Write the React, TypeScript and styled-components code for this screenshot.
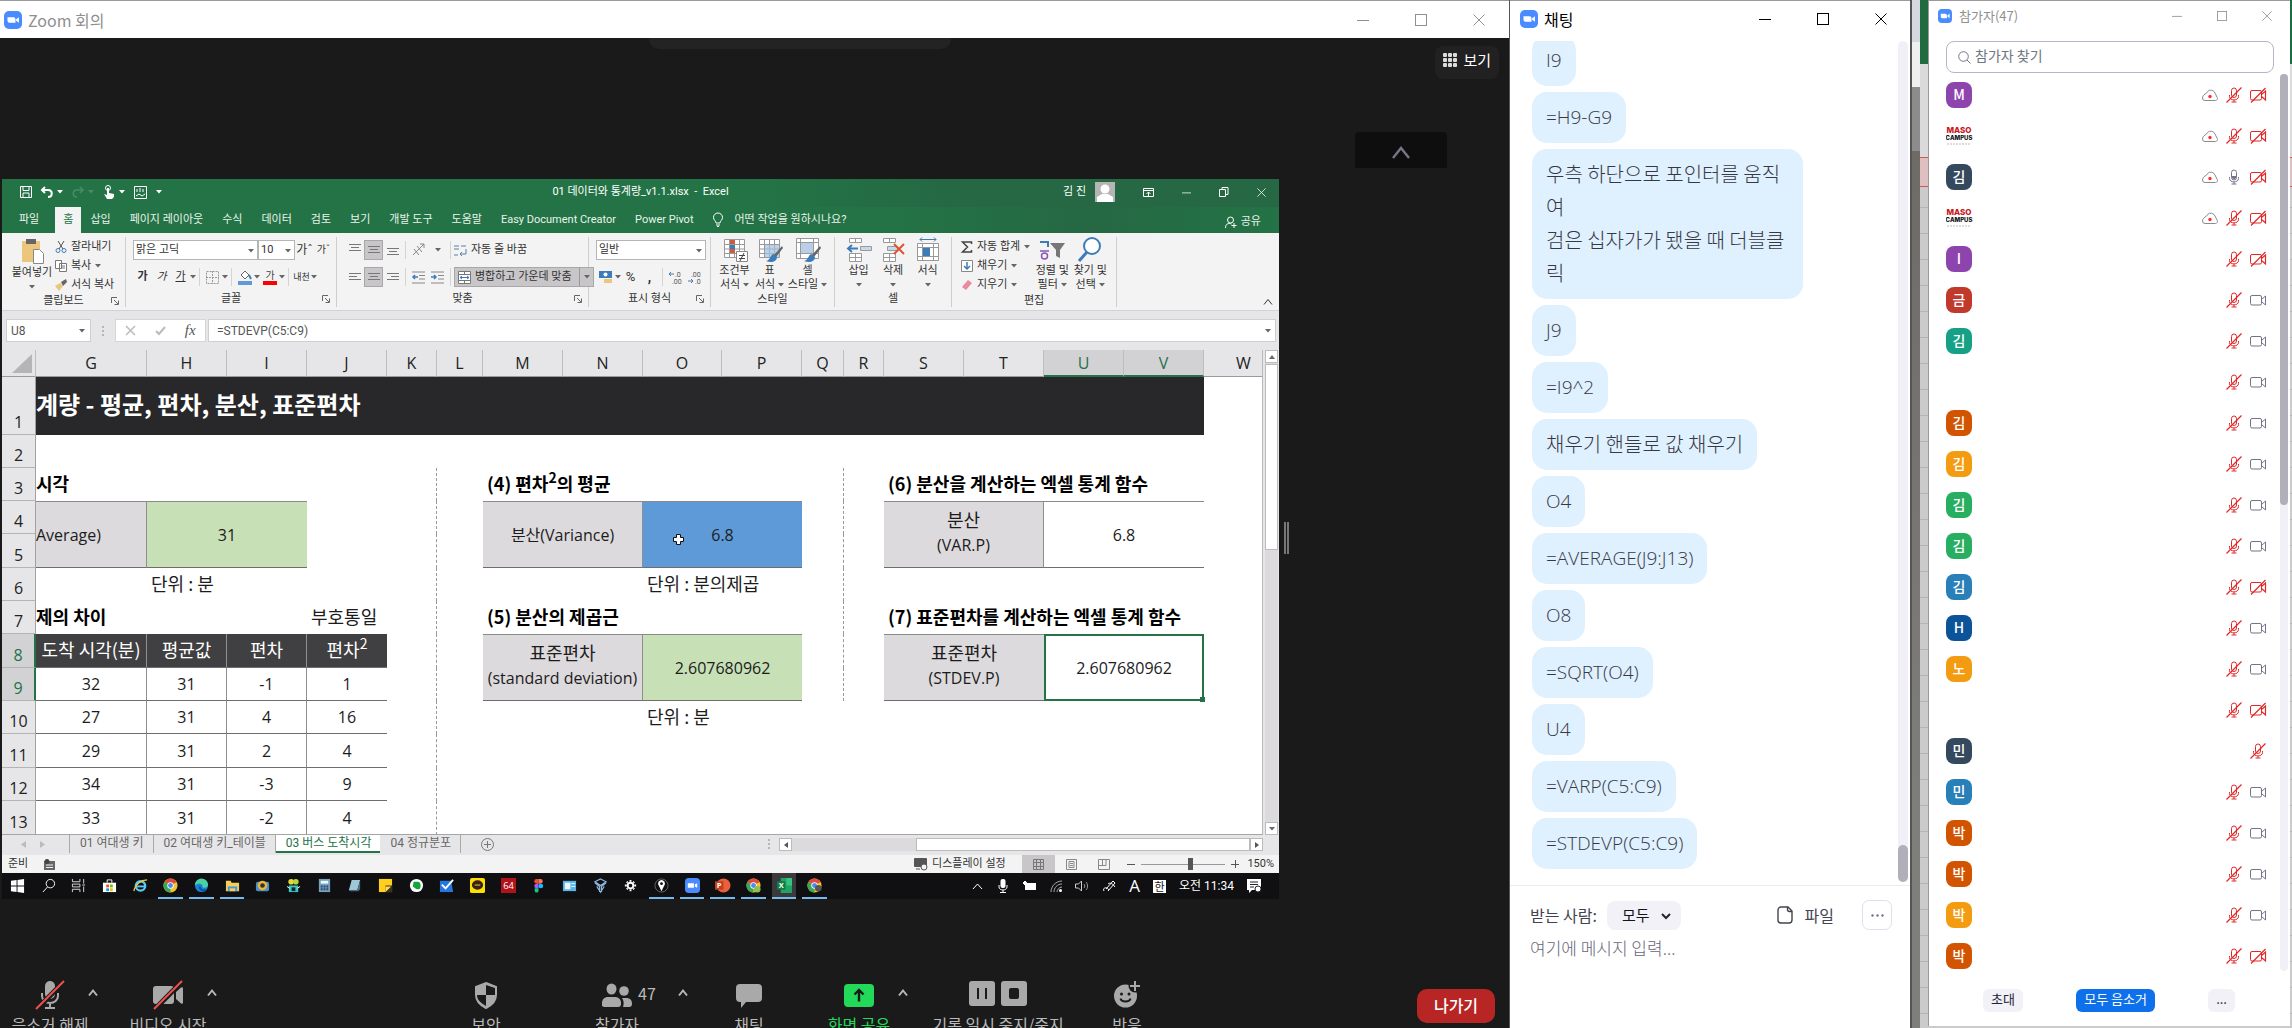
import React from "react";
import styled, { createGlobalStyle, css } from "styled-components";

const KR = `"Noto Sans CJK KR", sans-serif`;
const LATIN = `"Open Sans", "Noto Sans CJK KR", sans-serif`;
const OFFICE = `Roboto, "Noto Sans CJK KR", sans-serif`;

const Global = createGlobalStyle`
  *, *::before, *::after { box-sizing: border-box; }
  html, body { margin: 0; height: 100%; background: #cbcbcb; }
  body { font-family: ${KR}; overflow: hidden; }
  button, input, select, textarea { font: inherit; color: inherit; margin: 0; }
  button { border: 0; padding: 0; background: none; cursor: pointer; }
  svg { display: block; flex: none; overflow: visible; }
  sup { font-size: 14px; line-height: 0; vertical-align: 8px; }
`;

/* ---------- icons ---------- */

type SvgProps = { w: number; h?: number; vb?: string; children: React.ReactNode };
const Svg = ({ w, h = w, vb, children }: SvgProps) => (
  <svg width={w} height={h} viewBox={vb ?? `0 0 ${w} ${h}`} fill="none" stroke="none" aria-hidden="true">
    {children}
  </svg>
);

const ZoomLogo = ({ size = 18 }) => (
  <Svg w={size} vb="0 0 18 18">
    <rect width="18" height="18" rx="5" fill="#4a8cff" />
    <path d="M3.5 6.2h6a2 2 0 0 1 2 2v3.6h-6a2 2 0 0 1-2-2zM12.1 8.2l2.8-2v5.6l-2.8-2z" fill="#fff" />
  </Svg>
);
const Minimize = ({ size = 12 }) => (
  <Svg w={size} vb="0 0 12 12"><path d="M0 6.5h12" stroke="currentColor" /></Svg>
);
const Maximize = ({ size = 12 }) => (
  <Svg w={size} vb="0 0 12 12"><rect x=".5" y=".5" width="11" height="11" stroke="currentColor" /></Svg>
);
const Close = ({ size = 12 }) => (
  <Svg w={size} vb="0 0 12 12"><path d="M.5.5l11 11M11.5.5l-11 11" stroke="currentColor" /></Svg>
);
const Restore = () => (
  <Svg w={10}><path d="M.5 2.5h6v7h-6zM3 2.500V.5h6v7H6.500" stroke="currentColor" /></Svg>
);
const CaretDown = ({ color = "#666" }) => (
  <Svg w={6} h={4}><path d="M0 0h6L3 3.500z" fill={color} /></Svg>
);
const ChevronUp = ({ w = 10, sw = 2 }) => (
  <Svg w={w} h={w} vb="0 0 10 10"><path d="M1 7.500l4-5 4 5" stroke="currentColor" strokeWidth={sw} /></Svg>
);
const Launcher = () => (
  <Svg w={8}><path d="M.5 6V.5H6M3 3l4 4M7.500 3.500v4h-4" stroke="#666" /></Svg>
);
const Grip = () => (
  <Svg w={2} h={10}><path d="M0 0h2v2H0zM0 4h2v2H0zM0 8h2v2H0z" fill="#b5b5b5" /></Svg>
);

const MicMuted = () => (
  <Svg w={30}>
    <rect x="10" y="1" width="10" height="18" rx="5" fill="#a9a9a9" />
    <path d="M7 13v3a8 7 0 0 0 16 0v-3M15 23v5M10 28h10" stroke="#a9a9a9" strokeWidth="2" />
    <path d="M1.500 29.500L29.500 1" stroke="#1a1a1a" strokeWidth="5" />
    <path d="M1 29L29 1" stroke="#f05050" strokeWidth="2" />
  </Svg>
);
const VideoMuted = () => (
  <Svg w={30}>
    <rect x="0" y="6" width="21" height="18" rx="3" fill="#a9a9a9" />
    <path d="M23 12l5-4.500q2-1 2 1v14q0 2-2 1l-5-4.500z" fill="#a9a9a9" />
    <path d="M1.500 29.500L29.500 1" stroke="#1a1a1a" strokeWidth="5" />
    <path d="M1 29L29 1" stroke="#f05050" strokeWidth="2" />
  </Svg>
);
const Shield = () => (
  <Svg w={24} h={30}>
    <path d="M12 3l10 4v8c0 6-4 10-10 13C6 25 2 21 2 15V7z" fill="#a9a9a9" stroke="#a9a9a9" strokeWidth="2" />
    <path d="M12 5v10h9V8zM12 15v11c-5-3-9-6-9-11z" fill="#1a1a1a" />
  </Svg>
);
const People = () => (
  <Svg w={30}>
    <ellipse cx="9.500" cy="9" rx="5" ry="5.500" fill="#a9a9a9" />
    <path d="M0 26v-3c0-4 3-6 6-6h7c3 0 6 2 6 6v1c0 2-1 3-3 3H2z" fill="#a9a9a9" />
    <circle cx="22" cy="11" r="4.800" fill="#a9a9a9" />
    <path d="M20 18h4c4 0 6 2 6 6 0 2-1 3-3 3h-6c1-3 1-6-1-9z" fill="#a9a9a9" />
  </Svg>
);
const ChatBubble = () => (
  <Svg w={26} h={30}><path d="M4 4h18a4 4 0 0 1 4 4v10a4 4 0 0 1-4 4H10l-5 6v-6H4a4 4 0 0 1-4-4V8a4 4 0 0 1 4-4z" fill="#a9a9a9" /></Svg>
);
const ShareUp = () => (
  <Svg w={30}>
    <rect x="0" y="4" width="30" height="23" rx="4" fill="#23d959" />
    <path d="M15 21.500v-11M10.500 14.500l4.500-4.500 4.500 4.500" stroke="#1a1a1a" strokeWidth="2.400" />
  </Svg>
);
const PauseStop = () => (
  <Svg w={60} h={30}>
    <rect x="1" y="1" width="26" height="25" rx="3" fill="#a9a9a9" />
    <path d="M10 8v11M18 8v11" stroke="#1a1a1a" strokeWidth="2" />
    <rect x="33" y="1" width="26" height="25" rx="3" fill="#a9a9a9" />
    <rect x="41" y="8" width="10" height="11" rx="2" fill="#1a1a1a" />
  </Svg>
);
const Smile = () => (
  <Svg w={28} h={30}>
    <circle cx="12.500" cy="16" r="11.500" fill="#a9a9a9" />
    <circle cx="22" cy="6" r="6.500" fill="#1a1a1a" />
    <path d="M22 1v10M17 6h10" stroke="#a9a9a9" strokeWidth="2" />
    <circle cx="8.500" cy="14" r="1.500" fill="#1a1a1a" /><circle cx="16" cy="14" r="1.500" fill="#1a1a1a" />
    <path d="M7.500 18.500c1 4 9 4 10 0" stroke="#1a1a1a" strokeWidth="2" />
  </Svg>
);
const GridDots = () => (
  <Svg w={14}>
    {[0, 5, 10].map((y) => [0, 5, 10].map((x) => <rect key={`${x}${y}`} x={x} y={y} width="4" height="4" rx="1" fill="#ddd" />))}
  </Svg>
);

const RED = "#e02828";
const CloudRec = () => (
  <Svg w={16}>
    <path d="M3 13.500h10.500a2 2 0 0 0 1.700-3L13 6a4.600 4.600 0 0 0-7.500-1.500L4.300 6.300 3 7C1.500 8 .5 9.500.5 11A2.500 2.500 0 0 0 3 13.500z" stroke="#8b8a92" />
    <circle cx="8" cy="9.500" r="1.700" fill="#ff2d2d" />
  </Svg>
);
const MicOn = () => (
  <Svg w={16}>
    <rect x="5.500" y="1" width="5" height="10" rx="2.500" stroke="#747487" />
    <path d="M6 7h4v2l-2 1.500L6 9z" fill="#747487" />
    <path d="M3.500 8v1.500c0 4.500 9 4.500 9 0V8M8 13v2M5.500 15h5" stroke="#747487" />
  </Svg>
);
const MicOff = () => (
  <Svg w={16}>
    <rect x="5.500" y="1" width="5" height="9.500" rx="2.500" stroke={RED} />
    <path d="M3.500 8v1.500c0 4.500 9 4.500 9 0V8M8 13v2M5.500 15h5" stroke={RED} />
    <path d="M.5 15.500l15-15" stroke={RED} strokeWidth="1.200" />
  </Svg>
);
const CamOn = () => (
  <Svg w={16}>
    <rect x=".5" y="3.500" width="11" height="9.500" rx="1.500" stroke="#747487" />
    <path d="M11.500 7.500l4-3.500v9l-4-3.500" stroke="#747487" />
  </Svg>
);
const CamOff = () => (
  <Svg w={16}>
    <rect x=".5" y="3.500" width="11" height="9.500" rx="1.500" stroke={RED} />
    <path d="M11.500 7.500l4-3.500v9l-4-3.500M1 15.500L15.500 1" stroke={RED} strokeWidth="1.200" />
  </Svg>
);
const SearchIcon = ({ size = 13, color = "#747487" }) => (
  <Svg w={size} vb="0 0 13 13"><circle cx="5.500" cy="5.500" r="4.800" stroke={color} /><path d="M9 9l3.500 3.500" stroke={color} /></Svg>
);

/* ---------- windows shell ---------- */

const Desktop = styled.div`
  display: flex;
  height: 100vh;
  min-height: 640px;
  overflow: hidden;
`;
const Meeting = styled.section`
  flex: 1 1 0;
  min-width: 0;
  display: flex;
  flex-direction: column;
  background: #1a1a1a;
  overflow: hidden;
`;
const TitleBar = styled.header<{ $active?: boolean; $small?: boolean }>`
  flex: none;
  display: flex;
  align-items: center;
  height: ${(p) => (p.$small ? 32 : 38)}px;
  padding: ${(p) => (p.$small ? "0 18px 2px 9px" : "0 24px 0 4px")};
  gap: ${(p) => (p.$small ? 7 : 6)}px;
  background: #fff;
  border-top: 1px solid #9a9a9a;
  color: ${(p) => (p.$active ? "#000" : "#8f8f8f")};
  font-size: ${(p) => (p.$small ? 13 : 16)}px;
  line-height: 24px;
`;
const WindowTitle = styled.h1`
  margin: 0;
  flex: 1;
  font: inherit;
  font-weight: 400;
`;
const WindowButtons = styled.div<{ $gap: number }>`
  display: flex;
  gap: ${(p) => p.$gap}px;
`;
const WinBtns = ({ gap, size }: { gap: number; size?: number }) => (
  <WindowButtons $gap={gap}>
    <button aria-label="최소화"><Minimize size={size} /></button>
    <button aria-label="최대화"><Maximize size={size} /></button>
    <button aria-label="닫기"><Close size={size} /></button>
  </WindowButtons>
);

const Stage = styled.div`
  position: relative;
  flex: 1 1 0;
  min-height: 0;
  display: grid;
  grid-template-columns: minmax(0, 1fr) 230px;
`;
const TopTab = styled.div`
  position: absolute;
  top: 0;
  left: 43%;
  width: 20%;
  height: 11px;
  border-radius: 0 0 10px 10px;
  background: #232323;
`;
const ShareArea = styled.div`
  padding: 141px 0 0 2px;
  min-width: 0;
`;
const Side = styled.aside`
  display: flex;
  flex-direction: column;
`;
const ViewButton = styled.button`
  align-self: flex-end;
  display: flex;
  align-items: center;
  gap: 6px;
  height: 33px;
  margin: 8px 10px 0 0;
  padding: 0 8px 6px;
  border-radius: 8px;
  background: #212121;
  color: #fff;
  font-size: 15px;
`;
const CollapseButton = styled.button`
  display: grid;
  place-items: center;
  width: 92px;
  height: 36px;
  margin: 53px 0 0 76px;
  border-radius: 4px 4px 0 0;
  background: #0e0e0e;
  color: #77758a;
  padding-top: 6px;
`;
const Splitter = styled.div`
  width: 5px;
  height: 32px;
  margin: 354px 0 0 5px;
  border: solid #777;
  border-width: 0 2px;
`;

/* ---------- meeting toolbar ---------- */

const Toolbar = styled.footer`
  flex: none;
  display: flex;
  justify-content: space-between;
  height: 52px;
  padding-right: 14px;
`;
const ToolGroup = styled.div<{ $gap: number; $end?: number }>`
  display: flex;
  gap: ${(p) => p.$gap}px;
  padding-right: ${(p) => p.$end ?? 0}px;
`;
const Tool = styled.div<{ $w: number; $green?: boolean }>`
  width: ${(p) => p.$w}px;
  display: grid;
  grid-template-columns: 1fr auto 1fr;
  grid-template-rows: 36px 24px;
  color: ${(p) => (p.$green ? "#23d959" : "#b9b9b9")};
`;
const ToolIcon = styled.button`
  grid-column: 2;
  padding-top: 4px;
  display: flex;
  align-items: flex-start;
`;
const ToolExtra = styled.div`
  grid-column: 3;
  display: flex;
  align-items: center;
  justify-content: space-between;
  padding: 0 2px 2px 6px;
  color: #b9b9b9;
  font-size: 16px;
`;
const ToolLabel = styled.span`
  grid-column: 1 / -1;
  justify-self: center;
  white-space: nowrap;
  font-size: 16px;
  line-height: 24px;
`;
const LeaveButton = styled.button`
  width: 78px;
  height: 34px;
  margin-top: 13px;
  padding-bottom: 2px;
  border-radius: 10px;
  background: #b72624;
  color: #fff;
  font-size: 16px;
  font-weight: 500;
`;

type ToolProps = { w: number; icon: React.ReactNode; label: string; caret?: boolean; count?: string; green?: boolean };
const ToolItem = ({ w, icon, label, caret, count, green }: ToolProps) => (
  <Tool $w={w} $green={green}>
    <ToolIcon aria-label={label}>{icon}</ToolIcon>
    {caret && (
      <ToolExtra>
        <span>{count}</span>
        <button aria-label={`${label} 옵션`}><ChevronUp /></button>
      </ToolExtra>
    )}
    <ToolLabel>{label}</ToolLabel>
  </Tool>
);

/* ---------- Excel ---------- */

const Excel = styled.div`
  display: flex;
  flex-direction: column;
  background: #e6e6e8;
  font-family: ${OFFICE};
  font-size: 11px;
  line-height: 14px;
  color: #333;
`;
const ExcelTitle = styled.div`
  display: grid;
  grid-template-columns: 1fr auto 1fr;
  align-items: center;
  height: 28px;
  padding-bottom: 2px;
  background: linear-gradient(90deg, #237346 60%, #256843 75%, #256843);
  color: #fff;
`;
const Quick = styled.div`
  display: flex;
  align-items: center;
  padding-left: 18px;
  gap: 9px;
`;
const QuickPair = styled.div`
  display: flex;
  align-items: center;
  gap: 4px;
`;
const TitleRight = styled.div`
  display: flex;
  justify-content: flex-end;
  align-items: center;
  padding-right: 13px;
  gap: 28px;
`;
const Account = styled.div`
  display: flex;
  align-items: center;
  gap: 9px;
`;
const MenuTabs = styled.nav`
  display: flex;
  height: 26px;
  padding: 0 18px 0 8px;
  background: linear-gradient(90deg, #237346 70%, #256843 85%, #237346);
  color: #e9f3ec;
`;
const MenuTab = styled.button<{ $on?: boolean; $push?: boolean }>`
  display: flex;
  align-items: center;
  gap: ${(p) => (p.$push ? 4 : 12)}px;
  padding: 0 10px 0 9px;
  white-space: nowrap;
  ${(p) => p.$on && css`margin-left: 6px; background: #f3f3f3; color: #237346; padding: 0 8px;`}
  ${(p) => p.$push && css`margin-left: auto; padding: 4px 0 0;`}
`;
const Ribbon = styled.div`
  display: flex;
  height: 78px;
  padding: 4px 0 3px;
  background: #f3f3f3;
  border-bottom: 1px solid #d2d2d2;
`;
const Group = styled.div<{ $w: number }>`
  width: ${(p) => p.$w}px;
  flex: none;
  display: flex;
  flex-direction: column;
  border-right: 1px solid #cfcfcf;
`;
const GroupBody = styled.div<{ $pad?: number; $center?: boolean }>`
  flex: 1;
  display: flex;
  padding: 0 ${(p) => p.$pad ?? 7}px;
  justify-content: ${(p) => (p.$center ? "center" : "flex-start")};
`;
const GroupFoot = styled.div`
  display: grid;
  grid-template-columns: 14px 1fr 14px;
  align-items: center;
  text-align: center;
  height: 16px;
  button { grid-column: 3; }
  span { grid-column: 2; grid-row: 1; }
`;
const Rows = styled.div<{ $gap?: number }>`
  display: flex;
  flex-direction: column;
  gap: ${(p) => p.$gap ?? 2}px;
`;
const Line = styled.div<{ $h?: number }>`
  display: flex;
  align-items: center;
  height: ${(p) => p.$h ?? 24}px;
`;
const IconCell = styled.button<{ $on?: boolean; $w?: number }>`
  width: ${(p) => p.$w ?? 19}px;
  height: 20px;
  display: grid;
  place-items: center;
  ${(p) => p.$on && css`background: #c8c6c9; border: 1px solid #a8a8a8;`}
`;
const Sep = styled.i`
  width: 1px;
  height: 18px;
  margin: 0 3px;
  background: #d4d4d4;
`;
const Small = styled.button`
  display: flex;
  align-items: center;
  gap: 4px;
  height: 19px;
  white-space: nowrap;
`;
const Big = styled.button<{ $w: number }>`
  width: ${(p) => p.$w}px;
  display: flex;
  flex-direction: column;
  align-items: center;
  white-space: nowrap;
  line-height: 14px;
  > svg:first-child { margin-bottom: 1px; }
  span { display: flex; align-items: center; gap: 3px; min-height: 13px; }
`;
const SelectBox = styled.div<{ $w: number }>`
  position: relative;
  width: ${(p) => p.$w}px;
  height: 20px;
  border: 1px solid #b5b5b5;
  background: #fff;
  select {
    appearance: none;
    width: 100%;
    height: 18px;
    border: 0;
    padding: 0 2px;
    background: transparent;
    line-height: 18px;
    outline: none;
  }
  svg { position: absolute; right: 3px; top: 8px; pointer-events: none; }
`;
const MergeButton = styled.button`
  display: flex;
  align-items: center;
  height: 20px;
  padding: 0 3px;
  gap: 4px;
  border: 1px solid #a8a8a8;
  background: #c8c6c9;
  white-space: nowrap;
  i { width: 1px; height: 18px; background: #999; margin-left: 3px; }
`;
const RibbonEnd = styled.div`
  flex: 1;
  display: flex;
  align-items: flex-end;
  justify-content: flex-end;
  padding-right: 6px;
`;

const FormulaBar = styled.div`
  display: flex;
  align-items: center;
  height: 39px;
  padding: 0 3px 0 4px;
  font-size: 12px;
  color: #555;
`;
const NameBox = styled.div`
  display: flex;
  align-items: center;
  width: 85px;
  height: 23px;
  margin-right: 11px;
  padding: 0 5px 0 4px;
  border: 1px solid #cfcfcf;
  background: #fff;
  input { flex: 1; min-width: 0; border: 0; padding: 0; outline: none; background: none; }
`;
const FxBox = styled.div`
  display: flex;
  align-items: center;
  justify-content: space-around;
  width: 91px;
  height: 23px;
  margin: 0 2px 0 11px;
  border: 1px solid #d6d6d6;
  background: #fff;
  em { font-family: "Liberation Serif", serif; font-size: 15px; }
`;
const FormulaInput = styled.label`
  flex: 1;
  display: flex;
  align-items: center;
  height: 23px;
  padding: 0 4px 0 8px;
  border: 1px solid #cfcfcf;
  background: #fff;
  input { flex: 1; min-width: 0; border: 0; padding: 0; outline: none; background: none; }
`;

const SheetArea = styled.div`
  display: grid;
  grid-template-columns: minmax(0, 1fr) 16px;
  height: 485px;
`;
const SheetClip = styled.div`
  overflow: hidden;
  background: #fff;
  border-right: 1px solid #b9b9b9;
  border-bottom: 1px solid #a5a5a5;
`;
const Grid = styled.table`
  width: 100%;
  min-width: 1282px;
  table-layout: fixed;
  border-collapse: separate;
  border-spacing: 0;
  font-family: ${KR};
  font-size: 18px;
  line-height: 24px;
  color: #1c1c1c;
`;
const ColHead = styled.th<{ $on?: boolean }>`
  height: 27px;
  padding: 0;
  background: ${(p) => (p.$on ? "#d2d1d3" : "#e6e6e8")};
  color: ${(p) => (p.$on ? "#237346" : "#222")};
  border-right: 1px solid #bdbdbf;
  border-bottom: ${(p) => (p.$on ? "2px solid #237346" : "1px solid #9b9b9b")};
  font: 400 16px/24px ${LATIN};
`;
const RowHead = styled.th<{ $on?: boolean }>`
  padding: 0;
  vertical-align: bottom;
  background: ${(p) => (p.$on ? "#d2d1d3" : "#e6e6e8")};
  color: ${(p) => (p.$on ? "#237346" : "#222")};
  border-right: ${(p) => (p.$on ? "2px solid #237346" : "1px solid #a2a2a2")};
  border-bottom: 1px solid #b4b4b4;
  font: 400 16px/24px ${LATIN};
`;
type CellProps = { $bg?: string; $fg?: string; $bold?: boolean; $left?: boolean; $dots?: boolean; $num?: boolean; $t?: boolean; $b?: boolean; $r?: boolean; $big?: boolean; $cut?: boolean };
const Cell = styled.td<CellProps>`
  position: relative;
  padding: 0 0 ${(p) => (p.$num ? 0 : 4)}px ${(p) => (p.$left && !p.$cut ? 4 : 0)}px;
  overflow: hidden;
  white-space: nowrap;
  text-align: ${(p) => (p.$left ? "left" : "center")};
  background: ${(p) => p.$bg ?? "transparent"};
  color: ${(p) => p.$fg ?? "inherit"};
  ${(p) => p.$bold && css`font-weight: 700; color: ${p.$fg ?? "#000"};`}
  ${(p) => p.$num && css`font-family: ${LATIN}; font-size: 16px;`}
  ${(p) => p.$big && css`font-size: 24px; font-weight: 700; line-height: 32px;`}
  ${(p) => p.$dots && css`border-right: 1px dashed #999;`}
  ${(p) => p.$t && css`border-top: 1px solid #8a8a8a;`}
  ${(p) => p.$b && css`border-bottom: 1px solid #6e6e6e;`}
  ${(p) => p.$r && css`border-right: 1px solid #8f8f8f;`}
  small { display: block; font: 400 16px/28px ${LATIN}; }
`;
const Picked = styled(Cell)`
  overflow: visible;
  border: 2px solid #237346;
  &::after {
    content: "";
    position: absolute;
    right: -3px;
    bottom: -3px;
    width: 5px;
    height: 5px;
    background: #237346;
  }
`;
const CrossCursor = styled.span`
  position: absolute;
  left: 30px;
  top: 32px;
`;

const VScroll = styled.div`
  display: flex;
  flex-direction: column;
  background: #dcdadd;
  margin-left: 2px;
  border: solid #e6e6e8;
  border-width: 0 1px 0 0;
`;
const ScrollBtn = styled.button`
  display: grid;
  place-items: center;
  width: 13px;
  height: 13px;
  background: #fff;
  border: 1px solid #bbb;
`;
const VThumb = styled.div`
  height: 186px;
  margin: 1px 0 auto;
  width: 13px;
  background: #fff;
  border: 1px solid #bbb;
`;

const SheetTabs = styled.div`
  display: flex;
  align-items: flex-start;
  height: 20px;
  padding-right: 16px;
  font-size: 12px;
  line-height: 16px;
  color: #666;
`;
const SheetNav = styled.div`
  display: flex;
  align-items: center;
  gap: 14px;
  width: 68px;
  height: 18px;
  padding-left: 19px;
  border-right: 1px solid #aaa;
`;
const SheetTab = styled.button<{ $on?: boolean }>`
  height: 18px;
  padding: 0 9px 2px 10px;
  border-right: 1px solid #aaa;
  white-space: nowrap;
  ${(p) => p.$on && css`background: #fff; color: #237346; border-right: 0; border-bottom: 2px solid #237346; padding-bottom: 0;`}
`;
const AddSheet = styled.button`
  padding: 3px 20px;
`;
const HScroll = styled.div`
  flex: 0 1 484px;
  height: 13px;
  margin: 3px 0 0 9px;
  display: flex;
  background: #dcdadd;
`;
const GripSlot = styled.div`
  margin-left: auto;
  padding-top: 4px;
`;
const HThumb = styled.div`
  flex: 0 1 334px;
  margin-left: auto;
  background: #fff;
  border: 1px solid #bbb;
`;
const Status = styled.div`
  display: flex;
  align-items: center;
  height: 18px;
  padding: 0 5px 0 6px;
  background: #f3f3f3;
  gap: 16px;
`;
const StatusRight = styled.div`
  margin-left: auto;
  display: flex;
  align-items: center;
  gap: 6px;
`;
const ViewModes = styled.div`
  display: flex;
  margin-left: 10px;
`;
const ViewMode = styled.button<{ $on?: boolean }>`
  display: grid;
  place-items: center;
  width: 33px;
  height: 18px;
  background: ${(p) => (p.$on ? "#c8c6c9" : "none")};
`;
const ZoomRange = styled.input`
  appearance: none;
  width: 84px;
  height: 12px;
  background: linear-gradient(#999, #999) center / 100% 1px no-repeat;
  &::-webkit-slider-thumb { appearance: none; width: 5px; height: 12px; background: #555; }
`;

const Taskbar = styled.div`
  display: flex;
  align-items: stretch;
  justify-content: space-between;
  height: 26px;
  background: #101012;
  color: #fff;
  padding-right: 18px;
`;
const TaskApps = styled.div`
  display: flex;
  flex: 0 1 828px;
`;
const TaskApp = styled.button<{ $open?: boolean; $on?: boolean }>`
  flex: 1;
  display: grid;
  place-items: center;
  margin: 0 3px;
  border-bottom: 2px solid ${(p) => (p.$open ? "#76b9ed" : "transparent")};
  ${(p) => p.$on && css`background: #3a3a3c;`}
`;
const Tray = styled.div`
  display: flex;
  align-items: center;
  gap: 13px;
  font-size: 12px;
  b { font: 400 17px/20px ${LATIN}; }
`;

const Char = styled.span<{ $bold?: boolean; $italic?: boolean; $line?: boolean; $size?: number }>`
  font-size: ${(p) => p.$size ?? 11}px;
  font-weight: ${(p) => (p.$bold ? 700 : 400)};
  font-style: ${(p) => (p.$italic ? "italic" : "normal")};
  text-decoration: ${(p) => (p.$line ? "underline" : "none")};
`;

const AlignIcon = ({ y, short }: { y: number; short: "l" | "c" | "r" }) => {
  const off = short === "l" ? 0 : short === "c" ? 2 : 4;
  return (
    <Svg w={12}>
      <path d={`M0 ${y + 0.5}h12M${off} ${y + 3.5}h8M0 ${y + 6.5}h12`} stroke="#777" />
    </Svg>
  );
};
const Grid3 = ({ children }: { children: React.ReactNode }) => (
  <Svg w={26}>
    <path d="M2.500 2.500h20v18h-20zM2.500 7.500h20M2.500 12h20M2.500 16.500h20M7.500 2.500v18M12.500 2.500v18M17.500 2.500v18" fill="#fff" stroke="#9a9a9a" />
    {children}
  </Svg>
);
const Brush = () => (
  <g><path d="M25 9l-8 9 2 2 7-9z" fill="#666" /><path d="M17 17c-4 0-3 6-8 7 5 2 11 1 11-4z" fill="#3e7cb9" /></g>
);
const CellsIcon = ({ children }: { children: React.ReactNode }) => (
  <Svg w={26}>
    <path d="M3.500 1.500h12v4h-12zM9.500 1.500v4M3.500 16.500h12v8h-12zM3.500 20.500h12M9.500 16.500v8" fill="#fff" stroke="#999" />
    {children}
  </Svg>
);

const TASK_ICONS: { name: string; open?: boolean; on?: boolean; art: React.ReactNode }[] = [
  { name: "시작", art: <path d="M1 3l6-1v6H1zM8 2l7-1v7H8zM1 9h6v6l-6-1zM8 9h7v7l-7-1z" fill="#fff" /> },
  { name: "검색", art: <g stroke="#fff"><circle cx="10" cy="6" r="4.500" /><path d="M7 9.500L2 15" /></g> },
  { name: "작업 보기", art: <path d="M1.500 1v3h8V1M1.500 15v-3h8v3M1.500 6.500h8v3h-8zM13.500 1v5M13.500 9v6M12 7.500h3" stroke="#ddd" /> },
  { name: "스토어", art: <g><path d="M1 5h14v10H1z" fill="#fff" /><path d="M5.500 5V2h5v3" stroke="#fff" /><path d="M4.500 7h3v3h-3z" fill="#f25022" /><path d="M8.500 7h3v3h-3z" fill="#7fba00" /><path d="M4.500 11h3v3h-3z" fill="#00a4ef" /><path d="M8.500 11h3v3h-3z" fill="#ffb900" /></g> },
  { name: "Internet Explorer", art: <g><circle cx="8" cy="8.500" r="5" stroke="#5ac8f5" strokeWidth="2.500" /><path d="M4 9h9" stroke="#5ac8f5" strokeWidth="2" /><path d="M1 14C2 7 9 2 15 2" stroke="#f2c83c" strokeWidth="1.300" /></g> },
  { name: "Chrome", open: true, art: <Chrome /> },
  { name: "Edge", open: true, art: <g><circle cx="8" cy="8" r="7" fill="#1c7fd6" /><path d="M1 8a7 7 0 0 1 14-1c0 4-6 4-6 2 1-3-5-4-8-1z" fill="#48d3a0" /><path d="M6 9c0 3 3 5 7 4" stroke="#0b4f9c" strokeWidth="2" /></g> },
  { name: "탐색기", open: true, art: <g><path d="M1 3h5l1 2h8v9H1z" fill="#f7ce5b" /><path d="M3 9h10v5H3z" fill="#3f9be0" /><path d="M5 11h6v3H5z" fill="#f7ce5b" /></g> },
  { name: "보안", art: <g><rect x="1" y="4" width="14" height="10" rx="2" fill="#4f8fc8" /><circle cx="8" cy="8" r="5" fill="#e8b838" /><circle cx="8" cy="8" r="2.500" fill="#333" /></g> },
  { name: "메신저", art: <g><circle cx="5.500" cy="4" r="3" fill="#e8d838" /><circle cx="10.500" cy="4" r="3" fill="#b9d838" /><path d="M3 8h10v7H3z" fill="#39c7c0" /><path d="M1 9l3 2M15 9l-3 2" stroke="#fff" /><path d="M6 10h4v4H6z" fill="#123" /></g> },
  { name: "계산기", art: <g><rect x="2" y="1" width="12" height="14" fill="#7c9db8" /><path d="M4 3h8v3H4z" fill="#dff" /><path d="M4 8h2v2H4zM7 8h2v2H7zM10 8h2v2h-2zM4 11h2v2H4zM7 11h2v2H7zM10 11h2v2h-2z" fill="#1f4d77" /></g> },
  { name: "메모장", art: <g><path d="M5 2h9l-3 11H2z" fill="#9ec8d8" /><path d="M2 13h9l3-11v10l-2 2H3z" fill="#51707c" /></g> },
  { name: "스티커 메모", art: <g><path d="M1 1h14v14H1z" fill="#ffce1f" /><path d="M8 8h7v7H8z" fill="#3a3320" /><path d="M8 15V9h6z" fill="#ffde55" /></g> },
  { name: "Evernote", art: <g><circle cx="8" cy="8" r="7" fill="#fff" /><path d="M5 4h5c3 1 3 6 1 8H8l-4-3z" fill="#14a33c" /></g> },
  { name: "화이트보드", art: <g><path d="M1 3h12l2 12H1z" fill="#2277e0" /><path d="M3 7l4 4 8-9" stroke="#fff" strokeWidth="2" /></g> },
  { name: "카카오톡", art: <g><rect x="0" y="0" width="16" height="16" rx="2" fill="#fae100" /><ellipse cx="8" cy="7.500" rx="6" ry="5" fill="#3b1e1e" /><path d="M5 7.500h6" stroke="#fae100" /></g> },
  { name: "64", art: <g><rect width="16" height="16" fill="#b11319" /><text x="8" y="12" textAnchor="middle" fontSize="10" fill="#fff" fontFamily="Open Sans">64</text></g> },
  { name: "Figma", art: <g><path d="M8 1v5H6a2.500 2.500 0 0 1 0-5z" fill="#f24e1e" /><path d="M8 1h2a2.500 2.500 0 0 1 0 5H8z" fill="#ff7262" /><path d="M8 6v5H6a2.500 2.500 0 0 1 0-5z" fill="#a259ff" /><circle cx="10.500" cy="8.500" r="2.500" fill="#1abcfe" /><path d="M4 11h4v2.500a2 2 0 0 1-4 0z" fill="#0acf83" /></g> },
  { name: "원격", art: <g><path d="M1 3h14v11H1z" fill="#59b4e8" /><path d="M3 5h6v7H3z" fill="#e8f6ff" /><path d="M10 6h4M10 9h4" stroke="#fff" /></g> },
  { name: "VirtualBox", art: <path d="M8 1l6 3-6 4-6-4zM2 5l5 4v6M14 5L9 9v6M4 9l4 6 4-6" stroke="#8fb6dd" strokeWidth="1.300" /> },
  { name: "설정", art: <g stroke="#fff"><circle cx="8" cy="8" r="3" strokeWidth="2" /><path d="M8 2v2M8 12v2M2 8h2M12 8h2M4 4l1 1M11 11l1 1M12 4l-1 1M4 12l1-1" strokeWidth="2" /></g> },
  { name: "위치", open: true, art: <g><circle cx="8" cy="8" r="7" stroke="#666" /><path d="M8 2a4 4 0 0 1 3.500 5L8 14 4.500 7A4 4 0 0 1 8 2z" fill="#fff" /><circle cx="8" cy="6" r="1.500" fill="#111" /></g> },
  { name: "Zoom", open: true, art: <g><rect x="0" y="0" width="16" height="16" rx="4" fill="#4a8cff" /><path d="M3 5.500h6.500v5H3zM10.500 7l2.500-1.500v5L10.500 9z" fill="#fff" /></g> },
  { name: "PowerPoint", open: true, art: <g><circle cx="9" cy="8" r="7.500" fill="#e8603c" /><rect x="0" y="3.500" width="9" height="9" fill="#c43e1c" /><text x="4.500" y="11" textAnchor="middle" fontSize="8" fontWeight="700" fill="#fff" fontFamily="Open Sans">P</text></g> },
  { name: "Chrome 2", open: true, art: <g><Chrome /><circle cx="12" cy="12" r="3.500" fill="#8cc152" /></g> },
  { name: "Excel", open: true, on: true, art: <g><rect x="4" y="0" width="12" height="16" fill="#21a366" /><path d="M10 0h6v8h-6z" fill="#33c481" /><rect x="0" y="3.500" width="9" height="9" fill="#107c41" /><text x="4.500" y="11" textAnchor="middle" fontSize="8" fontWeight="700" fill="#fff" fontFamily="Open Sans">X</text></g> },
  { name: "Chrome 3", open: true, art: <g><Chrome /><circle cx="12" cy="11" r="3.500" fill="#555" /></g> },
];
function Chrome() {
  return (
    <g>
      <circle cx="8" cy="8" r="7.500" fill="#f3c332" />
      <path d="M8 8L1.500 4.250A7.500 7.500 0 0 1 14.500 4.250z" fill="#e04a3c" />
      <path d="M8 8L1.500 4.250A7.500 7.500 0 0 0 8 15.500z" fill="#3aa757" />
      <circle cx="8" cy="8" r="3.400" fill="#fff" /><circle cx="8" cy="8" r="2.600" fill="#4a8cf5" />
    </g>
  );
}

const COLS: [string, number][] = [["G", 111], ["H", 80], ["I", 80], ["J", 80], ["K", 50], ["L", 46], ["M", 80], ["N", 80], ["O", 79], ["P", 80], ["Q", 42], ["R", 40], ["S", 80], ["T", 80], ["U", 80], ["V", 80]];
const GRAY = "#dcdadd";
const GREEN = "#c8e0b6";
const DARK = "#403f41";

const Row = ({ n, h = 33, on, children }: { n: number; h?: number; on?: boolean; children?: React.ReactNode }) => (
  <tr style={{ height: h }}>
    <RowHead scope="row" $on={on}>{n}</RowHead>
    {children}
  </tr>
);
const Data = ({ v }: { v: number[] }) => (
  <>{v.map((x, i) => <Cell key={i} $num $b $r={i < 3}>{x}</Cell>)}</>
);

const Sheet = () => (
  <Grid>
    <colgroup>
      <col style={{ width: 34 }} />
      {COLS.map(([c, w]) => <col key={c} style={{ width: w }} />)}
      <col />
    </colgroup>
    <thead>
      <tr>
        <ColHead aria-label="모두 선택">
          <Svg w={33} h={26}><path d="M30 4v19H10z" fill="#b5b5b7" /></Svg>
        </ColHead>
        {COLS.map(([c]) => <ColHead key={c} scope="col" $on={c === "U" || c === "V"}>{c}</ColHead>)}
        <ColHead scope="col">W</ColHead>
      </tr>
    </thead>
    <tbody>
      <Row n={1} h={58}>
        <Cell colSpan={16} $bg="#28282a" $fg="#fff" $big $left $cut>계량 - 평균, 편차, 분산, 표준편차</Cell><Cell />
      </Row>
      <Row n={2}><Cell colSpan={17} /></Row>
      <Row n={3}>
        <Cell colSpan={4} $bold $left $cut>시각</Cell><Cell $dots /><Cell />
        <Cell colSpan={4} $bold $left>(4) 편차<sup>2</sup>의 평균</Cell><Cell $dots /><Cell />
        <Cell colSpan={5} $bold $left>(6) 분산을 계산하는 엑셀 통계 함수</Cell>
      </Row>
      <Row n={4}>
        <Cell rowSpan={2} $bg={GRAY} $num $left $cut $t $b $r>Average)</Cell>
        <Cell rowSpan={2} colSpan={2} $bg={GREEN} $num $t $b>31</Cell><Cell /><Cell $dots /><Cell />
        <Cell rowSpan={2} colSpan={2} $bg={GRAY} $num $t $b $r>분산(Variance)</Cell>
        <Cell rowSpan={2} colSpan={2} $bg="#5e9ad8" $num $t $b>
          6.8
          <CrossCursor>
            <Svg w={11}><path d="M3.500.5h4v3h3v4h-3v3h-4v-3h-3v-4h3z" fill="#fff" stroke="#111" /></Svg>
          </CrossCursor>
        </Cell>
        <Cell $dots /><Cell />
        <Cell rowSpan={2} colSpan={2} $bg={GRAY} $t $b $r>분산<small>(VAR.P)</small></Cell>
        <Cell rowSpan={2} colSpan={2} $num $t $b>6.8</Cell><Cell />
      </Row>
      <Row n={5} h={34}><Cell /><Cell $dots /><Cell /><Cell $dots /><Cell /><Cell /></Row>
      <Row n={6}>
        <Cell /><Cell colSpan={3} $left>단위 : 분</Cell><Cell $dots /><Cell />
        <Cell colSpan={2} /><Cell colSpan={2} $left>단위 : 분의제곱</Cell><Cell $dots /><Cell /><Cell colSpan={5} />
      </Row>
      <Row n={7}>
        <Cell colSpan={3} $bold $left $cut>제의 차이</Cell><Cell $left>부호통일</Cell><Cell $dots /><Cell />
        <Cell colSpan={4} $bold $left>(5) 분산의 제곱근</Cell><Cell $dots /><Cell />
        <Cell colSpan={5} $bold $left>(7) 표준편차를 계산하는 엑셀 통계 함수</Cell>
      </Row>
      <Row n={8} h={34} on>
        <Cell $bg={DARK} $fg="#fff" $b $r>도착 시각(분)</Cell><Cell $bg={DARK} $fg="#fff" $b $r>평균값</Cell>
        <Cell $bg={DARK} $fg="#fff" $b $r>편차</Cell><Cell $bg={DARK} $fg="#fff" $b>편차<sup>2</sup></Cell>
        <Cell $dots /><Cell />
        <Cell rowSpan={2} colSpan={2} $bg={GRAY} $t $b $r>표준편차<small>(standard deviation)</small></Cell>
        <Cell rowSpan={2} colSpan={2} $bg={GREEN} $num $t $b>2.607680962</Cell>
        <Cell $dots /><Cell />
        <Cell rowSpan={2} colSpan={2} $bg={GRAY} $t $b>표준편차<small>(STDEV.P)</small></Cell>
        <Picked rowSpan={2} colSpan={2} $num>2.607680962</Picked><Cell />
      </Row>
      <Row n={9} on><Data v={[32, 31, -1, 1]} /><Cell $dots /><Cell /><Cell $dots /><Cell /><Cell /></Row>
      <Row n={10}>
        <Data v={[27, 31, 4, 16]} /><Cell $dots /><Cell /><Cell colSpan={2} />
        <Cell colSpan={2} $left>단위 : 분</Cell><Cell colSpan={7} />
      </Row>
      <Row n={11} h={34}><Data v={[29, 31, 2, 4]} /><Cell $dots /><Cell colSpan={12} /></Row>
      <Row n={12}><Data v={[34, 31, -3, 9]} /><Cell $dots /><Cell colSpan={12} /></Row>
      <Row n={13} h={34}><Data v={[33, 31, -2, 4]} /><Cell $dots /><Cell colSpan={12} /></Row>
    </tbody>
  </Grid>
);

const Foot = ({ label, launcher }: { label: string; launcher?: boolean }) => (
  <GroupFoot>
    <span>{label}</span>
    {launcher && <button aria-label={`${label} 설정`}><Launcher /></button>}
  </GroupFoot>
);

const RibbonView = () => (
  <Ribbon>
    <Group $w={124}>
      <GroupBody>
        <Big $w={46}>
          <Svg w={26} h={28}>
            <path d="M3 4h18v21H3z" fill="#ecc67c" /><path d="M7 2h10v5H7z" fill="#666" />
            <path d="M14.500 12.500h6l4 4v10h-10z" fill="#fff" stroke="#888" />
          </Svg>
          붙여넣기<span><CaretDown /></span>
        </Big>
        <Rows $gap={0}>
          <Small>
            <Svg w={12}><path d="M3 0l5 8M9 0L4 8" stroke="#555" /><circle cx="3" cy="9.500" r="2" stroke="#3e7cb9" /><circle cx="9" cy="9.500" r="2" stroke="#3e7cb9" /></Svg>
            잘라내기
          </Small>
          <Small>
            <Svg w={12}><path d="M.5.5h6v8h-6zM4.500 3.500h7v8h-7zM6 6h4M6 8h4" fill="#fff" stroke="#777" /></Svg>
            복사 <CaretDown />
          </Small>
          <Small>
            <Svg w={12}><path d="M0 7l5-3 3 3-4 5z" fill="#ecc67c" /><path d="M6 3l5-3 1 3-4 4z" fill="#666" /></Svg>
            서식 복사
          </Small>
        </Rows>
      </GroupBody>
      <Foot label="클립보드" launcher />
    </Group>
    <Group $w={211}>
      <GroupBody>
        <Rows>
          <Line $h={26}>
            <SelectBox $w={125}><select aria-label="글꼴"><option>맑은 고딕</option></select><CaretDown /></SelectBox>
            <SelectBox $w={37}><select aria-label="글꼴 크기"><option>10</option></select><CaretDown /></SelectBox>
            <IconCell><Char $size={12}>가ˆ</Char></IconCell>
            <IconCell><Char $size={10}>가ˇ</Char></IconCell>
          </Line>
          <Line>
            <IconCell><Char $bold>가</Char></IconCell>
            <IconCell><Char $italic>가</Char></IconCell>
            <IconCell><Char $line>가</Char></IconCell>
            <CaretDown /><Sep />
            <IconCell><Svg w={13}><path d="M.5.5h12v12H.5zM6.500 0v13M0 6.500h13" stroke="#999" strokeDasharray="2 1" /></Svg></IconCell>
            <CaretDown /><Sep />
            <IconCell><Svg w={14} h={16}><path d="M3 6l4-4 4 4-4 4z" fill="#fff" stroke="#666" /><path d="M11 6l2 4" stroke="#3e7cb9" strokeWidth="2" /><path d="M0 12h14v4H0z" fill="#5e9ad8" /></Svg></IconCell>
            <CaretDown />
            <IconCell><Svg w={14} h={16}><text x="7" y="10" textAnchor="middle" fontSize="10" fill="#444">가</text><path d="M0 12h14v4H0z" fill="#f00" /></Svg></IconCell>
            <CaretDown /><Sep />
            <IconCell><Char $size={9}>내천</Char></IconCell>
            <CaretDown />
          </Line>
        </Rows>
      </GroupBody>
      <Foot label="글꼴" launcher />
    </Group>
    <Group $w={252}>
      <GroupBody $pad={8}>
        <Rows>
          <Line $h={26}>
            <IconCell><AlignIcon y={0} short="c" /></IconCell>
            <IconCell $on><AlignIcon y={2} short="c" /></IconCell>
            <IconCell><AlignIcon y={4} short="c" /></IconCell>
            <Sep />
            <IconCell><Svg w={14}><path d="M1 12L12 1M12 1H8M12 1v4M2 6l5 6M5 3l5 6" stroke="#888" /></Svg></IconCell>
            <IconCell aria-label="방향"><CaretDown /></IconCell>
            <Sep />
            <Small>
              <Svg w={13}><path d="M0 2h5M7 2h5M0 5h5M0 11h4M12 5v5H6M8 8l-2 2 2 2" stroke="#5a7fa8" /></Svg>
              자동 줄 바꿈
            </Small>
          </Line>
          <Line>
            <IconCell><AlignIcon y={2} short="l" /></IconCell>
            <IconCell $on><AlignIcon y={2} short="c" /></IconCell>
            <IconCell><AlignIcon y={2} short="r" /></IconCell>
            <Sep />
            <IconCell><Svg w={13}><path d="M0 1h13M7 4.500h6M7 8h6M0 12h13" stroke="#888" /><path d="M6 6H1M3 4L1 6l2 2" stroke="#3e7cb9" strokeWidth="1.500" /></Svg></IconCell>
            <IconCell><Svg w={13}><path d="M0 1h13M7 4.500h6M7 8h6M0 12h13" stroke="#888" /><path d="M0 6h5M3 4l2 2-2 2" stroke="#3e7cb9" strokeWidth="1.500" /></Svg></IconCell>
            <Sep />
            <MergeButton>
              <Svg w={13}><path d="M.5.5h12v12H.5zM0 3.500h13M0 9.500h13M6.500 0v3M6.500 10v3" fill="#fff" stroke="#777" /><path d="M2 6.500h9M4 5L2 6.500 4 8M9 5l2 1.500L9 8" stroke="#3e7cb9" /></Svg>
              병합하고 가운데 맞춤<i /><CaretDown />
            </MergeButton>
          </Line>
        </Rows>
      </GroupBody>
      <Foot label="맞춤" launcher />
    </Group>
    <Group $w={122}>
      <GroupBody>
        <Rows>
          <Line $h={26}>
            <SelectBox $w={110}><select aria-label="표시 형식"><option>일반</option></select><CaretDown /></SelectBox>
          </Line>
          <Line>
            <IconCell><Svg w={14}><path d="M0 1h13v7H0z" fill="#3e7cb9" /><circle cx="6.500" cy="4.500" r="2" fill="#fff" /><path d="M5 9h8v4H5z" fill="#ecc67c" /></Svg></IconCell>
            <CaretDown />
            <IconCell><Char $size={13}>%</Char></IconCell>
            <IconCell><Char $bold $size={14}>,</Char></IconCell>
            <Sep />
            <IconCell><Svg w={14}><text x="6" y="7" fontSize="7" fill="#555">.0</text><text x="3" y="14" fontSize="7" fill="#555">.00</text><path d="M5 4H0M2 2L0 4l2 2" stroke="#3e7cb9" /></Svg></IconCell>
            <IconCell><Svg w={14}><text x="3" y="7" fontSize="7" fill="#555">.00</text><text x="7" y="14" fontSize="7" fill="#555">.0</text><path d="M0 11h5M3 9l2 2-2 2" stroke="#3e7cb9" /></Svg></IconCell>
          </Line>
        </Rows>
      </GroupBody>
      <Foot label="표시 형식" launcher />
    </Group>
    <Group $w={124}>
      <GroupBody $pad={2} $center>
        <Big $w={36}>
          <Grid3><path d="M8 3h5v4H8z" fill="#d05a3c" /><path d="M8 8h5v4H8z" fill="#3e7cb9" /><path d="M8 12h5v4H8z" fill="#d05a3c" /><path d="M14.500 14.500h11v10h-11z" fill="#fff" stroke="#888" /><path d="M17 18.500h6M17 21.500h6M22 16l-4 8" stroke="#444" /></Grid3>
          조건부<span>서식 <CaretDown /></span>
        </Big>
        <Big $w={34}>
          <Grid3><path d="M8 8h14v12H8z" fill="#9fbfe0" fillOpacity=".7" /><Brush /></Grid3>
          표<span>서식 <CaretDown /></span>
        </Big>
        <Big $w={42}>
          <Svg w={26}><path d="M1.500 1.500h22v20h-22zM1.500 5.500h22M1.500 16.500h22M5.500 1.500v20M18.500 1.500v20" fill="#fff" stroke="#999" /><path d="M6 6h12v10H6z" fill="#b9cfe8" /><Brush /></Svg>
          셀<span>스타일 <CaretDown /></span>
        </Big>
      </GroupBody>
      <Foot label="스타일" />
    </Group>
    <Group $w={117}>
      <GroupBody $pad={2} $center>
        <Big $w={34}><CellsIcon><path d="M14.500 9.500h11v4h-11z" fill="#c5d8ee" stroke="#999" /><path d="M12 11.500H2M6 8l-4 3.500L6 15" stroke="#3e7cb9" strokeWidth="2" /></CellsIcon>삽입<span><CaretDown /></span></Big>
        <Big $w={35}><CellsIcon><path d="M7.500 9.500h10v4h-10z" fill="#c5d8ee" stroke="#999" /><path d="M14 7l10 10M24 7L14 17" stroke="#e0532d" strokeWidth="2" /></CellsIcon>삭제<span><CaretDown /></span></Big>
        <Big $w={34}><Svg w={26}><path d="M2.500 6.500h21v17h-21zM2.500 10.500h21M2.500 19.500h21M7.500 6.500v17M18.500 6.500v17" fill="#fff" stroke="#999" /><path d="M8 11h7v8H8z" fill="#3e7cb9" /><path d="M5 2.500h16M7 .5l-2 2 2 2M19 .5l2 2-2 2" stroke="#3e7cb9" /></Svg>서식<span><CaretDown /></span></Big>
      </GroupBody>
      <Foot label="셀" />
    </Group>
    <Group $w={165}>
      <GroupBody $pad={9}>
        <Rows $gap={0}>
          <Small><Svg w={12}><path d="M10.500 3V1H1.500l5 5-5 5h9V9" stroke="#444" strokeWidth="1.500" /></Svg>자동 합계 <CaretDown /></Small>
          <Small><Svg w={12}><path d="M.5.5h11v11H.5z" fill="#fff" stroke="#888" /><path d="M6 2v7M3 6l3 3 3-3" stroke="#3e7cb9" strokeWidth="1.500" /></Svg>채우기 <CaretDown /></Small>
          <Small><Svg w={12}><path d="M1 8l6-7 4 3-6 7z" fill="#e88aa0" /></Svg>지우기 <CaretDown /></Small>
        </Rows>
        <Big $w={44}>
          <Svg w={26}><path d="M1 5h8v5" stroke="#3e7cb9" strokeWidth="2" /><path d="M1 14h9" stroke="#8857b5" strokeWidth="1.500" /><circle cx="5.500" cy="19" r="3" stroke="#8857b5" strokeWidth="1.500" /><path d="M11 6h15l-5 7v8l-4-2v-6z" fill="#777" /></Svg>
          정렬 및<span>필터 <CaretDown /></span>
        </Big>
        <Big $w={32}>
          <Svg w={26}><circle cx="15" cy="9" r="8" fill="#fff" stroke="#3e7cb9" strokeWidth="2" /><path d="M10 15l-8 9" stroke="#3e7cb9" strokeWidth="3" /></Svg>
          찾기 및<span>선택 <CaretDown /></span>
        </Big>
      </GroupBody>
      <Foot label="편집" />
    </Group>
    <RibbonEnd><button aria-label="리본 축소"><ChevronUp sw={1} /></button></RibbonEnd>
  </Ribbon>
);

const ExcelView = () => (
  <Excel>
    <ExcelTitle>
      <Quick>
        <button aria-label="저장"><Svg w={12}><path d="M.5.5h11v11H.5zM3 .5v4h6v-4M3 11V7h6v4" stroke="#fff" /></Svg></button>
        <QuickPair>
          <button aria-label="실행 취소"><Svg w={12}><path d="M4 1L1 4l3 3M1 4h6c5 0 5 7 0 7" stroke="#fff" strokeWidth="2" /></Svg></button>
          <CaretDown color="#fff" />
        </QuickPair>
        <QuickPair>
          <button aria-label="다시 실행"><Svg w={12}><path d="M8 1l3 3-3 3M11 4H5c-5 0-5 7 0 7" stroke="#4d8a66" strokeWidth="1.500" /></Svg></button>
          <CaretDown color="#4d8a66" />
        </QuickPair>
        <QuickPair>
          <button aria-label="터치 모드"><Svg w={12} h={14}><circle cx="5" cy="3" r="2.500" stroke="#fff" /><path d="M4 3h2v5l5 1v3l-2 2H4L1 9l3 1z" fill="#fff" /></Svg></button>
          <CaretDown color="#fff" />
        </QuickPair>
        <button aria-label="차트"><Svg w={13}><path d="M.5.5h12v12H.5z" stroke="#fff" /><path d="M3 6V3M6 6V2M9 6V3M2 10l3-2 3 2 3-2" stroke="#fff" /></Svg></button>
        <CaretDown color="#fff" />
      </Quick>
      <span>01 데이터와 통계량_v1.1.xlsx&nbsp; - &nbsp;Excel</span>
      <TitleRight>
        <Account>
          김 진
          <Svg w={20}><rect width="20" height="20" fill="#b5b5b5" /><circle cx="10" cy="7" r="4.500" fill="#fff" /><path d="M2 20v-5l5-3h6l5 3v5z" fill="#fff" /></Svg>
        </Account>
        <button aria-label="리본 표시 옵션"><Svg w={11} h={9}><path d="M.5.5h10v8H.5zM0 2.500h11M5.500 8V4M3.500 6l2-2 2 2" stroke="#fff" /></Svg></button>
        <button aria-label="최소화"><Minimize size={9} /></button>
        <button aria-label="이전 크기로"><Restore /></button>
        <button aria-label="닫기"><Close size={9} /></button>
      </TitleRight>
    </ExcelTitle>
    <MenuTabs>
      <MenuTab>파일</MenuTab><MenuTab $on>홈</MenuTab>
      {["삽입", "페이지 레이아웃", "수식", "데이터", "검토", "보기", "개발 도구", "도움말", "Easy Document Creator", "Power Pivot"].map((t) => <MenuTab key={t}>{t}</MenuTab>)}
      <MenuTab>
        <Svg w={10} h={14}><path d="M3 10c0-2-2.500-3-2.500-5.500a4.500 4.500 0 0 1 9 0C9.500 7 7 8 7 10zM3 12h4M4 13.500h2" stroke="#fff" /></Svg>
        어떤 작업을 원하시나요?
      </MenuTab>
      <MenuTab $push>
        <Svg w={12} h={13}><circle cx="5.500" cy="4" r="3" stroke="#fff" /><path d="M.5 12c0-5 4-5 6-4M9 7v5M6.500 9.500h5" stroke="#fff" /></Svg>
        공유
      </MenuTab>
    </MenuTabs>
    <RibbonView />
    <FormulaBar>
      <NameBox><input aria-label="이름 상자" defaultValue="U8" /><CaretDown /></NameBox>
      <Grip />
      <FxBox>
        <button aria-label="취소"><Svg w={11}><path d="M1 1l9 9M10 1l-9 9" stroke="#bbb" strokeWidth="1.500" /></Svg></button>
        <button aria-label="입력"><Svg w={11}><path d="M1 6l3 3 6-7" stroke="#bbb" strokeWidth="2" /></Svg></button>
        <button aria-label="함수 삽입"><em>fx</em></button>
      </FxBox>
      <FormulaInput><input aria-label="수식" defaultValue="=STDEVP(C5:C9)" /><CaretDown /></FormulaInput>
    </FormulaBar>
    <SheetArea>
      <SheetClip><Sheet /></SheetClip>
      <VScroll>
        <ScrollBtn aria-label="위로"><Svg w={6} h={4}><path d="M0 4h6L3 0z" fill="#666" /></Svg></ScrollBtn>
        <VThumb />
        <ScrollBtn aria-label="아래로"><CaretDown /></ScrollBtn>
      </VScroll>
    </SheetArea>
    <SheetTabs>
      <SheetNav>
        <Svg w={5} h={7}><path d="M5 0v7L0 3.500z" fill="#bbb" /></Svg>
        <Svg w={5} h={7}><path d="M0 0v7l5-3.500z" fill="#bbb" /></Svg>
      </SheetNav>
      <SheetTab>01 여대생 키</SheetTab><SheetTab>02 여대생 키_테이블</SheetTab>
      <SheetTab $on>03 버스 도착시각</SheetTab><SheetTab>04 정규분포</SheetTab>
      <AddSheet aria-label="새 시트">
        <Svg w={13}><circle cx="6.500" cy="6.500" r="6" stroke="#777" /><path d="M6.500 3v7M3 6.500h7" stroke="#777" /></Svg>
      </AddSheet>
      <GripSlot><Grip /></GripSlot>
      <HScroll>
        <ScrollBtn aria-label="왼쪽"><Svg w={4} h={6}><path d="M4 0v6L0 3z" fill="#555" /></Svg></ScrollBtn>
        <HThumb />
        <ScrollBtn aria-label="오른쪽"><Svg w={4} h={6}><path d="M0 0v6l4-3z" fill="#555" /></Svg></ScrollBtn>
      </HScroll>
    </SheetTabs>
    <Status>
      준비
      <Svg w={11}><path d="M0 2h11v9H0z" fill="#666" /><circle cx="3" cy="2.500" r="2.500" fill="#444" /><path d="M2 6h7M2 8.500h7" stroke="#eee" /></Svg>
      <StatusRight>
        <Small><Svg w={14} h={13}><rect width="13" height="9" rx="1" fill="#555" /><circle cx="10" cy="9" r="3" fill="#f3f3f3" stroke="#555" /><path d="M2 11h4" stroke="#555" /></Svg>디스플레이 설정</Small>
        <ViewModes>
          <ViewMode $on aria-label="기본"><Svg w={11}><path d="M.5.5h10v10H.5zM0 3.500h11M0 7.500h11M3.500 0v11M7.500 0v11" stroke="#777" /></Svg></ViewMode>
          <ViewMode aria-label="페이지 레이아웃"><Svg w={11}><path d="M.5.5h10v10H.5zM3 2.500h5v6H3zM4 4.500h3M4 6.500h3" stroke="#888" /></Svg></ViewMode>
          <ViewMode aria-label="페이지 나누기"><Svg w={12} h={11}><path d="M.5.5h11v10H.5zM4.500 0v6M.5 6.500h7.500V0" stroke="#888" /></Svg></ViewMode>
        </ViewModes>
        <button aria-label="축소"><Svg w={8}><path d="M0 4.500h8" stroke="#555" /></Svg></button>
        <ZoomRange type="range" min={10} max={240} defaultValue={148} aria-label="확대/축소" />
        <button aria-label="확대"><Svg w={8}><path d="M0 4.500h8M4.500 0v8" stroke="#555" /></Svg></button>
        <span>&nbsp;150%</span>
      </StatusRight>
    </Status>
    <Taskbar>
      <TaskApps>
        {TASK_ICONS.map((t) => (
          <TaskApp key={t.name} aria-label={t.name} $open={t.open} $on={t.on}><Svg w={15} vb="0 0 16 16">{t.art}</Svg></TaskApp>
        ))}
      </TaskApps>
      <Tray>
        <Svg w={11}><path d="M1 8l4.500-5L10 8" stroke="#fff" /></Svg>
        <Svg w={14}><rect x="4.500" y="0" width="5" height="9" rx="2" fill="#fff" /><path d="M3 6v2c0 4 8 4 8 0V6M7 11v3M4 13.500h6" stroke="#fff" /></Svg>
        <Svg w={14}><rect x="2" y="4" width="11" height="7" fill="#fff" /><path d="M0 4h4M2 2v4" stroke="#fff" strokeWidth="2" /></Svg>
        <Svg w={12}><path d="M1 12C1 6 6 1 12 1M4 12c0-4 3-8 8-8M7 12c0-2 2-5 5-5" stroke="#aaa" /><circle cx="10.500" cy="10.500" r="1.500" fill="#fff" /></Svg>
        <Svg w={14}><path d="M.5 5h3l3-3v10l-3-3h-3z" stroke="#ccc" /><path d="M9 5c1 1 1 3 0 4M11 3c2 2 2 6 0 8" stroke="#999" /></Svg>
        <Svg w={14}><path d="M2 12c-2-3 3-5 5-1M4 10l7-8 2 2-7 8M6 5c2-2 5 0 7 3" stroke="#fff" /></Svg>
        <b>A</b>
        <Svg w={13}><rect width="13" height="13" fill="#fff" /><text x="6.500" y="10.500" textAnchor="middle" fontSize="11" fill="#111">한</text></Svg>
        <span>오전 11:34</span>
        <Svg w={14}><path d="M0 0h14v11H5l-3 3v-3H0z" fill="#fff" /><path d="M3 3h8M3 5.500h8M3 8h4" stroke="#222" /><circle cx="11" cy="10" r="3" fill="#fff" stroke="#222" /></Svg>
      </Tray>
    </Taskbar>
  </Excel>
);

/* ---------- chat ---------- */

const Chat = styled.section`
  flex: 0 0 403px;
  display: flex;
  flex-direction: column;
  background: #fff;
  border: solid #555;
  border-width: 0 2px 0 1px;
`;
const ChatTitle = styled(TitleBar)`
  height: 41px;
  padding: 0 23px 4px 10px;
`;
const ChatBody = styled.div`
  flex: 1 1 0;
  min-height: 0;
  display: flex;
  justify-content: space-between;
  border-bottom: 1px solid #ebebf0;
`;
const Messages = styled.ol`
  flex: 1;
  margin: 0;
  padding: 0 84px 16px 22px;
  list-style: none;
  display: flex;
  flex-direction: column;
  justify-content: flex-end;
  align-items: flex-start;
  gap: 6px;
  overflow: hidden;
`;
const Message = styled.li<{ $latin?: boolean }>`
  flex: none;
  max-width: 271px;
  padding: ${(p) => (p.$latin ? "9px 14px" : "8px 14px 10px")};
  border-radius: 15px;
  background: #dff0ff;
  color: #383842;
  font-size: ${(p) => (p.$latin ? 19 : 20)}px;
  font-family: ${(p) => (p.$latin ? LATIN : KR)};
  font-weight: 300;
  line-height: 33px;
  white-space: pre-line;
  word-break: break-all;
`;
const Track = styled.div<{ $w: number }>`
  display: flex;
  flex-direction: column;
  width: ${(p) => p.$w}px;
  border-radius: 5px;
  background: #f1f0f6;
`;
const Thumb = styled.div<{ $top?: boolean }>`
  height: ${(p) => (p.$top ? "48%" : "37px")};
  margin-top: ${(p) => (p.$top ? 0 : "auto")};
  border-radius: 5px;
  background: #b0afba;
`;
const ChatTrack = styled(Track)`
  margin: 0 2px 3px 0;
`;
const Compose = styled.form`
  flex: none;
  display: flex;
  flex-direction: column;
  height: 142px;
  padding: 14px 18px 0 20px;
  color: #444450;
  font-size: 16px;
`;
const ToRow = styled.div`
  display: flex;
  align-items: center;
  height: 30px;
`;
const Recipient = styled.div`
  position: relative;
  margin: 0 auto 0 10px;
  select {
    appearance: none;
    width: 74px;
    height: 29px;
    border: 0;
    border-radius: 8px;
    padding: 0 0 2px 15px;
    background: #f2f1f7;
    color: #131619;
    font-size: 15px;
  }
  svg { position: absolute; right: 10px; top: 11px; pointer-events: none; }
`;
const FileButton = styled.button`
  display: flex;
  align-items: center;
  gap: 12px;
`;
const MoreButton = styled.button`
  display: grid;
  place-items: center;
  width: 30px;
  height: 30px;
  margin-left: 28px;
  border: 1px solid #e0dfec;
  border-radius: 7px;
`;
const MessageBox = styled.textarea`
  flex: 1;
  margin-top: 6px;
  padding: 0;
  border: 0;
  outline: none;
  resize: none;
  font-size: 17px;
  line-height: 24px;
  &::placeholder { color: #666678; opacity: 1; font-weight: 300; }
`;

const MESSAGES = ["I9", "=H9-G9", "우측 하단으로 포인터를 움직여\n검은 십자가가 됐을 때 더블클릭", "J9", "=I9^2", "채우기 핸들로 값 채우기", "O4", "=AVERAGE(J9:J13)", "O8", "=SQRT(O4)", "U4", "=VARP(C5:C9)", "=STDEVP(C5:C9)"];

/* ---------- backdrop behind the side windows ---------- */

const Backdrop = styled.div`
  flex: 0 0 16px;
  display: flex;
`;
const BackdropGray = styled.div`
  flex: 1;
  background: linear-gradient(#d5d8df 42px, #efefef 42px, #efefef 87px, #8c8c8c 87px, #8c8c8c 151px, #6e6b67 151px, #7e7e7b 80%);
`;
const BackdropSheet = styled.div<{ $w?: number }>`
  width: ${(p) => p.$w ?? 8}px;
  background:
    linear-gradient(#1f6c41 64px, #dadada 64px, #dadada 157px, #d9534f 157px, #d9534f 158px, #e0bfc0 158px, #e0bfc0 186px, #d9534f 186px, #d9534f 187px, transparent 187px),
    repeating-linear-gradient(#cbcbcb 0, #cbcbcb 25px, #b4b4b4 25px, #b4b4b4 26px);
`;

/* ---------- participants ---------- */

const PeopleWindow = styled.section`
  flex: 0 0 362px;
  display: flex;
  flex-direction: column;
  margin-bottom: 2px;
  background: #fff;
  border-left: 1px solid #999;
`;
const SearchField = styled.label`
  flex: none;
  display: flex;
  align-items: center;
  gap: 4px;
  height: 32px;
  margin: 9px 16px 0 17px;
  padding: 0 11px;
  border: 1px solid #b8b4cc;
  border-radius: 8px;
  font-size: 14px;
  input { flex: 1; min-width: 0; border: 0; padding: 0 0 5px; outline: none; background: none; line-height: 20px; }
  input::placeholder { color: #6e7680; opacity: 1; }
`;
const ListWrap = styled.div`
  flex: 1 1 0;
  min-height: 0;
  display: flex;
  padding: 1px 2px 0 17px;
`;
const List = styled.ul`
  flex: 1;
  margin: 0;
  padding: 0;
  list-style: none;
  overflow: hidden;
`;
const Person = styled.li`
  display: flex;
  align-items: center;
  height: 41px;
`;
const Avatar = styled.span<{ $c?: string }>`
  display: grid;
  place-items: center;
  width: 26px;
  height: 26px;
  margin-right: auto;
  border-radius: 8px;
  background: ${(p) => p.$c ?? "transparent"};
  color: #fff;
  font-size: 14px;
  font-weight: 500;
  line-height: 20px;
  padding-bottom: 2px;
`;
const Icons = styled.span`
  display: flex;
  gap: 8px;
  margin-right: 14px;
`;
const Maso = () => (
  <Svg w={26}>
    <text x="13" y="10" textAnchor="middle" fontFamily="Inter, sans-serif" fontWeight="800" fontSize="8" fill="#c8191e">MASO</text>
    <text x="13" y="17" textAnchor="middle" fontFamily="Inter, sans-serif" fontWeight="800" fontSize="6" fill="#111">CAMPUS</text>
    <path d="M1 21h24" stroke="#bbb" strokeDasharray="2 1" />
  </Svg>
);
const PeopleFooter = styled.footer`
  flex: none;
  display: flex;
  justify-content: space-between;
  padding: 18px 55px 14px 54px;
`;
const Pill = styled.button<{ $primary?: boolean }>`
  height: 23px;
  padding: 0 8px 3px;
  border-radius: 6px;
  background: ${(p) => (p.$primary ? "#0e71eb" : "#f2f1f7")};
  color: ${(p) => (p.$primary ? "#fff" : "#232333")};
  font-size: 13px;
  line-height: 20px;
`;

type P = { t?: string; c?: string; i: string };
const O = "#d35400", Y = "#f39c12", G = "#27ae60", B = "#2980b9", N = "#34495e", V = "#8e44ad";
/* c: cloud recording, m/M: mic off/on, v/V: camera off/on */
const PEOPLE: P[] = [
  { t: "M", c: V, i: "cmv" }, { t: "MASO", i: "cmv" }, { t: "김", c: N, i: "cMv" }, { t: "MASO", i: "cmv" },
  { t: "I", c: V, i: "mv" }, { t: "금", c: "#c0392b", i: "mV" }, { t: "김", c: "#16a085", i: "mV" }, { i: "mV" },
  { t: "김", c: O, i: "mV" }, { t: "김", c: Y, i: "mV" }, { t: "김", c: G, i: "mV" }, { t: "김", c: G, i: "mV" },
  { t: "김", c: B, i: "mv" }, { t: "H", c: "#0b5499", i: "mV" }, { t: "노", c: Y, i: "mV" }, { i: "mv" },
  { t: "민", c: N, i: "m" }, { t: "민", c: B, i: "mV" }, { t: "박", c: O, i: "mV" }, { t: "박", c: O, i: "mV" },
  { t: "박", c: Y, i: "mV" }, { t: "박", c: O, i: "mv" },
];
const ICONS: Record<string, React.ReactNode> = { c: <CloudRec />, m: <MicOff />, M: <MicOn />, v: <CamOff />, V: <CamOn /> };

export default function App() {
  return (
    <>
      <Global />
      <Desktop>
        <Meeting>
          <TitleBar><ZoomLogo /><WindowTitle>Zoom 회의</WindowTitle><WinBtns gap={46} /></TitleBar>
          <Stage>
            <TopTab />
            <ShareArea><ExcelView /></ShareArea>
            <Side>
              <ViewButton><GridDots />보기</ViewButton>
              <CollapseButton aria-label="접기"><ChevronUp w={20} sw={1.2} /></CollapseButton>
              <Splitter />
            </Side>
          </Stage>
          <Toolbar>
            <ToolGroup $gap={17}>
              <ToolItem w={100} icon={<MicMuted />} label="음소거 해제" caret />
              <ToolItem w={102} icon={<VideoMuted />} label="비디오 시작" caret />
            </ToolGroup>
            <ToolGroup $gap={28} $end={12}>
              <ToolItem w={60} icon={<Shield />} label="보안" />
              <ToolItem w={146} icon={<People />} label="참가자" caret count="47" />
              <ToolItem w={62} icon={<ChatBubble />} label="채팅" />
              <ToolItem w={102} icon={<ShareUp />} label="화면 공유" caret green />
              <ToolItem w={120} icon={<PauseStop />} label="기록 일시 중지/중지" />
              <ToolItem w={82} icon={<Smile />} label="반응" />
            </ToolGroup>
            <LeaveButton>나가기</LeaveButton>
          </Toolbar>
        </Meeting>

        <Chat>
          <ChatTitle $active><ZoomLogo /><WindowTitle>채팅</WindowTitle><WinBtns gap={46} /></ChatTitle>
          <ChatBody>
            <Messages>
              {MESSAGES.map((m) => <Message key={m} $latin={/^[\x00-\x7f]+$/.test(m)}>{m}</Message>)}
            </Messages>
            <ChatTrack $w={10}><Thumb /></ChatTrack>
          </ChatBody>
          <Compose>
            <ToRow>
              <label htmlFor="to">받는 사람:</label>
              <Recipient>
                <select id="to"><option>모두</option></select>
                <Svg w={10} h={8}><path d="M1 2l4 4 4-4" stroke="#232333" strokeWidth="2" /></Svg>
              </Recipient>
              <FileButton type="button">
                <Svg w={16} h={18}><path d="M4 1h7l4 4v9a3 3 0 0 1-3 3H4a3 3 0 0 1-3-3V4a3 3 0 0 1 3-3zM10.500 1v2.500a2 2 0 0 0 2 2H15" stroke="#444450" strokeWidth="1.400" /></Svg>
                파일
              </FileButton>
              <MoreButton type="button" aria-label="더 보기"><Svg w={13} h={3}><circle cx="1.500" cy="1.500" r="1.200" fill="#747487" /><circle cx="6.500" cy="1.500" r="1.200" fill="#747487" /><circle cx="11.500" cy="1.500" r="1.200" fill="#747487" /></Svg></MoreButton>
            </ToRow>
            <MessageBox aria-label="메시지" placeholder="여기에 메시지 입력..." />
          </Compose>
        </Chat>

        <Backdrop><BackdropGray /><BackdropSheet /></Backdrop>

        <PeopleWindow>
          <TitleBar $small><ZoomLogo size={14} /><WindowTitle>참가자(47)</WindowTitle><WinBtns gap={35} size={10} /></TitleBar>
          <SearchField><SearchIcon /><input placeholder="참가자 찾기" aria-label="참가자 찾기" /></SearchField>
          <ListWrap>
            <List>
              {PEOPLE.map((p, k) => (
                <Person key={k}>
                  <Avatar $c={p.c}>{p.t === "MASO" ? <Maso /> : p.t}</Avatar>
                  <Icons>{p.i.split("").map((x) => <React.Fragment key={x}>{ICONS[x]}</React.Fragment>)}</Icons>
                </Person>
              ))}
            </List>
            <Track $w={8}><Thumb $top /></Track>
          </ListWrap>
          <PeopleFooter>
            <Pill>초대</Pill><Pill $primary>모두 음소거</Pill><Pill>...</Pill>
          </PeopleFooter>
        </PeopleWindow>
        <BackdropSheet $w={2} />
      </Desktop>
    </>
  );
}
